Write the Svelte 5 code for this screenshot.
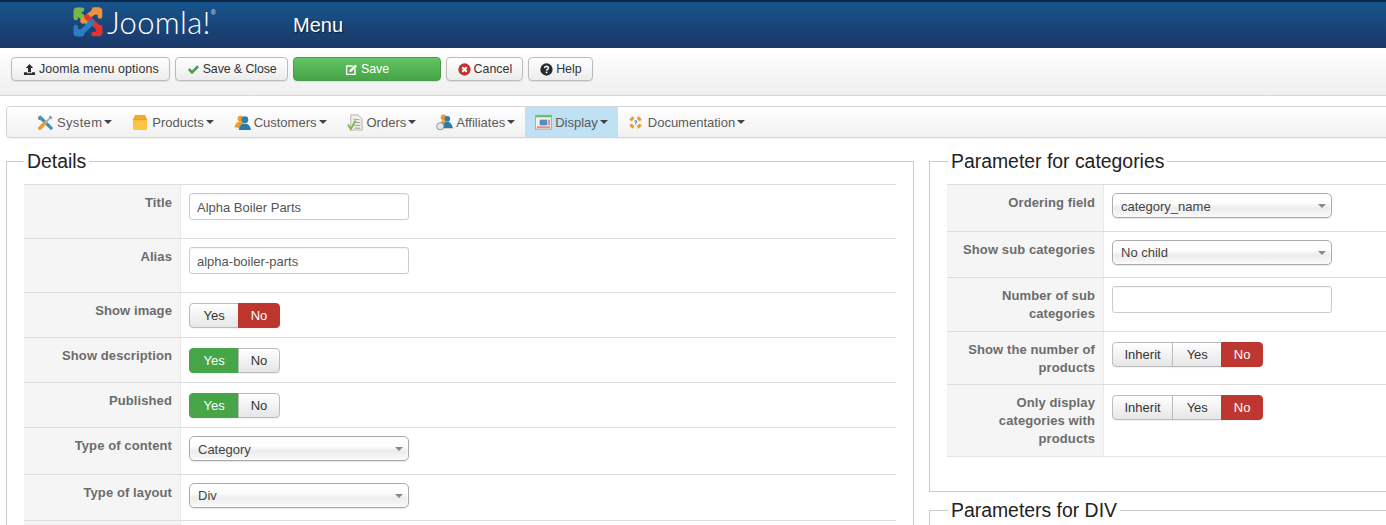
<script>
	const navItems = [
		{ label: 'System', icon: 'system' },
		{ label: 'Products', icon: 'products' },
		{ label: 'Customers', icon: 'customers' },
		{ label: 'Orders', icon: 'orders' },
		{ label: 'Affiliates', icon: 'affiliates' },
		{ label: 'Display', icon: 'display', active: true },
		{ label: 'Documentation', icon: 'docs' }
	];

	const details = [
		{ label: 'Title', type: 'text', value: 'Alpha Boiler Parts' },
		{ label: 'Alias', type: 'text', value: 'alpha-boiler-parts' },
		{ label: 'Show image', type: 'radio', options: ['Yes', 'No'], selected: 'No' },
		{ label: 'Show description', type: 'radio', options: ['Yes', 'No'], selected: 'Yes' },
		{ label: 'Published', type: 'radio', options: ['Yes', 'No'], selected: 'Yes' },
		{ label: 'Type of content', type: 'select', value: 'Category' },
		{ label: 'Type of layout', type: 'select', value: 'Div' },
		{ label: '', type: 'none' }
	];

	const categoryParams = [
		{ label: 'Ordering field', type: 'select', value: 'category_name' },
		{ label: 'Show sub categories', type: 'select', value: 'No child' },
		{ label: 'Number of sub categories', type: 'text', value: '' },
		{ label: 'Show the number of products', type: 'radio', options: ['Inherit', 'Yes', 'No'], selected: 'No' },
		{ label: 'Only display categories with products', type: 'radio', options: ['Inherit', 'Yes', 'No'], selected: 'No' }
	];
</script>

{#snippet navIcon(name)}
	<svg class="nav-icon" viewBox="0 0 18 18" aria-hidden="true">
		{#if name === 'system'}
			<path d="M4 4 L15 15" stroke="#3f8fb5" stroke-width="3.4" stroke-linecap="round" />
			<path d="M1 3.5 L3.5 1 L4 3.5 L6.5 4 L4.5 7 L1.5 6 Z" fill="#4f93b5" />
			<path d="M9 9 L3 15" stroke="#ef9a2e" stroke-width="3.8" stroke-linecap="round" />
			<path d="M9 9 L15 3" stroke="#9fb4bf" stroke-width="2" />
			<path d="M14 1.5 L16.5 4 L15 5.5 L12.5 3 Z" fill="#7f98a5" />
		{:else if name === 'products'}
			<path d="M1 6 L3 1 H14 L16 6 Z" fill="#f2a92f" />
			<rect x="1" y="5.5" width="15" height="11.5" rx="1" fill="#fbc443" />
			<rect x="1" y="5.5" width="15" height="1" fill="#dc9a2a" />
		{:else if name === 'customers'}
			<circle cx="7" cy="5" r="3.2" fill="#ef9a2e" />
			<path d="M0.5 14 Q2 8 7 8 Q10 8 11 13 L8 15 Z" fill="#ef9a2e" />
			<circle cx="11.5" cy="6" r="3.6" fill="#2f7fa8" />
			<path d="M5 17 Q6 10 11.5 10 Q17 10 18 17 Z" fill="#2a7ba5" />
		{:else if name === 'orders'}
			<path d="M4 1 H12 L16 5 V17 H4 Z" fill="#efefe8" stroke="#b5b5ad" />
			<path d="M7 6 H13 M7 9 H14 M8 12 H14 M8 15 H14" stroke="#9a9a92" />
			<path d="M1 11 L4 16 L9 7" fill="none" stroke="#7ab648" stroke-width="2" />
		{:else if name === 'affiliates'}
			<circle cx="8" cy="3.6" r="3" fill="#ef9a2e" />
			<path d="M4 12 Q5 6.5 8 6.5 Q11 6.5 12 12 Z" fill="#ef9a2e" />
			<circle cx="12" cy="5" r="3" fill="#2f7fa8" />
			<path d="M7 15 Q8 8 12 8 Q16 8 18 15 Z" fill="#2a7ba5" />
			<circle cx="4.5" cy="13" r="3.8" fill="#dfe7ea" stroke="#7d97a3" />
		{:else if name === 'display'}
			<rect x="0.5" y="2" width="17" height="14" fill="#f4f1ec" stroke="#a9a9a9" />
			<rect x="0.5" y="1" width="17" height="2.5" fill="#6fbf73" />
			<rect x="5" y="6" width="8" height="6" fill="#4d8fc5" />
			<rect x="2" y="13" width="14" height="2" fill="#e88a8a" />
			<rect x="14" y="6" width="2" height="6" fill="#d88" />
		{:else if name === 'docs'}
			<circle cx="8" cy="9" r="5.5" fill="none" stroke="#f3f3f3" stroke-width="3" />
			<circle class="ring" cx="8" cy="9" r="5.5" pathLength="4" fill="none" stroke="#e59a2c" stroke-width="3.2" />
			<path d="M6.6 7.8 Q8 6.6 9.3 7.7 Q9.5 8.7 8 9.6 V10.2 M8 11 V11.8" fill="none" stroke="#4a90c2" stroke-width="1.2" />
		{/if}
	</svg>
{/snippet}

{#snippet paramRow(row)}
	<div class="row">
		<div class="row-label">{row.label}</div>
		<div class="row-control">
			{#if row.type === 'text'}
				<input class="text-input" type="text" value={row.value} />
			{:else if row.type === 'select'}
				<div class="select">
					<span>{row.value}</span>
					<i class="select-caret"></i>
				</div>
			{:else if row.type === 'radio'}
				<div class="radio-group">
					{#each row.options as option}
						<button
							class="radio"
							class:yes={option === 'Yes'}
							class:inherit={option === 'Inherit'}
							class:on-yes={row.selected === option && option === 'Yes'}
							class:on-no={row.selected === option && option === 'No'}
						>{option}</button>
					{/each}
				</div>
			{/if}
		</div>
	</div>
{/snippet}

<div class="page">
	<header class="topbar">
		<div class="brand">
			<svg class="brand-mark" viewBox="0 0 30 30" aria-hidden="true">
				<path d="M4 5 L16 17" stroke="#7ab648" stroke-width="5.4" stroke-linecap="round" fill="none" />
				<path d="M2.8 11 V4 Q3 2.6 4.4 2.8 H9" stroke="#7ab648" stroke-width="4.6" stroke-linecap="round" stroke-linejoin="round" fill="none" />
				<path d="M25 5 H20.5 L10 14" stroke="#f0923b" stroke-width="5.4" stroke-linecap="round" stroke-linejoin="round" fill="none" />
				<path d="M27 9.5 V4 Q27 2.6 25.6 2.6 H21" stroke="#f0923b" stroke-width="4.6" stroke-linecap="round" stroke-linejoin="round" fill="none" />
				<path d="M25.5 25 V21 L14 10" stroke="#e2332f" stroke-width="5.4" stroke-linecap="round" stroke-linejoin="round" fill="none" />
				<path d="M20.5 27 H26 Q27.2 27 27.2 25.6 V20" stroke="#e2332f" stroke-width="4.6" stroke-linecap="round" stroke-linejoin="round" fill="none" />
				<path d="M5 25 H9 L18.5 15.5" stroke="#2b7fc1" stroke-width="5.4" stroke-linecap="round" stroke-linejoin="round" fill="none" />
				<path d="M2.8 20 V26 Q2.8 27.2 4 27.2 H9" stroke="#2b7fc1" stroke-width="4.6" stroke-linecap="round" stroke-linejoin="round" fill="none" />
			</svg>
			<span class="brand-name">Joomla!</span>
			<span class="brand-reg">®</span>
		</div>
		<h1>Menu</h1>
	</header>

	<div class="toolbar">
		<button class="tool">
			<svg class="tool-icon" viewBox="0 0 14 14" aria-hidden="true">
				<path d="M7 1 L11 5.5 H8.6 V10 H5.4 V5.5 H3 Z M1 10 H4.4 V11 H9.6 V10 H13 V13 H1 Z" fill="#2b2b2b" />
			</svg>
			Joomla menu options
		</button>
		<button class="tool">
			<svg class="tool-icon" viewBox="0 0 14 14" aria-hidden="true">
				<path d="M1 7.5 L3 5.5 L5.4 8 L11 2.5 L13 4.5 L5.4 12 Z" fill="#4d9e52" />
			</svg>
			Save &amp; Close
		</button>
		<button class="tool save">
			<svg class="tool-icon" viewBox="0 0 14 14" aria-hidden="true">
				<path d="M1 2.5 H9 L7.6 4 H2.5 V11.5 H10 V7 L11.5 5.5 V13 H1 Z" fill="#fff" />
				<path d="M5 7.5 L11 1.5 L13 3.5 L7 9.5 L4.6 10 Z" fill="#fff" />
			</svg>
			Save
		</button>
		<button class="tool">
			<svg class="tool-icon" viewBox="0 0 14 14" aria-hidden="true">
				<circle cx="7" cy="7" r="6.6" fill="#c9302c" />
				<path d="M4.6 4.6 L9.4 9.4 M9.4 4.6 L4.6 9.4" stroke="#fff" stroke-width="2.2" />
			</svg>
			Cancel
		</button>
		<button class="tool">
			<svg class="tool-icon" viewBox="0 0 14 14" aria-hidden="true">
				<circle cx="7" cy="7" r="6.6" fill="#252a30" />
				<path d="M4.9 5.4 Q5.2 3.5 7.2 3.5 Q9.2 3.6 9.2 5.2 Q9.2 6.2 7.8 7 Q7.1 7.4 7.1 8.2" fill="none" stroke="#fff" stroke-width="1.6" />
				<rect x="6.2" y="9.2" width="1.8" height="1.8" fill="#fff" />
			</svg>
			Help
		</button>
	</div>

	<nav class="menu">
		{#each navItems as item}
			<div class="menu-item" class:active={item.active}>
				{@render navIcon(item.icon)}
				<span>{item.label}</span>
				<i class="menu-caret"></i>
			</div>
		{/each}
	</nav>

	<main class="columns">
		<fieldset class="panel">
			<legend>Details</legend>
			<div class="rows">
				{#each details as row}
					{@render paramRow(row)}
				{/each}
			</div>
		</fieldset>

		<div class="side">
			<fieldset class="panel">
				<legend>Parameter for categories</legend>
				<div class="rows closed">
					{#each categoryParams as row}
						{@render paramRow(row)}
					{/each}
				</div>
			</fieldset>
			<fieldset class="panel">
				<legend>Parameters for DIV</legend>
			</fieldset>
		</div>
	</main>
</div>

<style>
	:global(body) {
		margin: 0;
		background: #fff;
		overflow: hidden;
	}

	.page {
		width: 1386px;
		height: 525px;
		overflow: hidden;
		font-family: "Liberation Sans", Arial, sans-serif;
		font-size: 13px;
		color: #555;
	}

	.topbar {
		box-sizing: border-box;
		height: 48px;
		display: flex;
		align-items: center;
		border-top: 2px solid #0c2947;
		background: linear-gradient(#17558c, #1b3768);
	}

	.brand {
		display: flex;
		align-items: center;
		width: 220px;
		margin-left: 73px;
		height: 32px;
		margin-top: -6px;
	}

	.brand-mark {
		width: 30px;
		height: 30px;
		flex: none;
	}

	.brand-name {
		margin-left: 4px;
		font-family: Lato, sans-serif;
		font-weight: 300;
		font-size: 31px;
		line-height: 32px;
		letter-spacing: 0.3px;
		color: #fff;
	}

	.brand-reg {
		align-self: flex-start;
		font-size: 7px;
		color: #dfe6ee;
		margin-top: 3px;
	}

	h1 {
		margin: 0;
		font-size: 20px;
		font-weight: 400;
		color: #fff;
		text-shadow: 1px 1px 1px #0b1d38;
	}

	.toolbar {
		box-sizing: border-box;
		height: 48px;
		display: flex;
		align-items: flex-start;
		gap: 5px;
		padding: 9px 0 0 11px;
		background: linear-gradient(#fff, #efefef);
		border-bottom: 1px solid #d6d6d6;
	}

	.tool {
		box-sizing: border-box;
		height: 24px;
		padding: 0 10px 0 11px;
		display: flex;
		align-items: center;
		justify-content: center;
		gap: 3px;
		font: 12.4px "Liberation Sans", Arial, sans-serif;
		color: #333;
		background: linear-gradient(#fff, #ececec);
		border: 1px solid #bbb;
		border-radius: 4px;
		box-shadow: 0 1px 1px rgba(0, 0, 0, 0.08);
	}

	.tool:nth-child(1) {
		letter-spacing: 0.1px;
	}

	.tool:nth-child(2) {
		letter-spacing: -0.1px;
	}

	.tool.save {
		width: 148px;
		color: #fff;
		background: linear-gradient(#62c462, #46a546);
		border-color: #4a9a4a;
	}

	.tool-icon {
		width: 13px;
		height: 13px;
		flex: none;
	}

	.menu {
		box-sizing: border-box;
		width: 1400px;
		height: 32px;
		margin: 10px 0 0 6px;
		padding-left: 20px;
		display: flex;
		border: 1px solid #d4d4d4;
		border-radius: 4px;
		background: linear-gradient(#fff, #f1f1f1);
		box-shadow: 0 1px 2px rgba(0, 0, 0, 0.06);
	}

	.menu-item {
		display: flex;
		align-items: center;
		padding: 0 10px;
		font-size: 13px;
		color: #5a5a5a;
	}

	.menu-item:first-child span {
		letter-spacing: 0.33px;
	}

	.menu-item.active {
		background: #c0e0f3;
	}

	.nav-icon {
		width: 17px;
		height: 17px;
		margin-right: 3px;
		flex: none;
	}

	.ring {
		stroke-dasharray: 0.5 0.5;
		stroke-dashoffset: -0.25;
	}

	.menu-caret {
		margin-left: 2px;
		border-top: 4px solid #444;
		border-left: 4px solid transparent;
		border-right: 4px solid transparent;
	}

	.columns {
		display: grid;
		grid-template-columns: 908px 470px;
		gap: 15px;
		margin: 12px 0 0 6px;
		align-items: start;
	}

	.panel {
		margin: 0;
		padding: 0 17px;
		border: 1px solid #ccc;
		min-width: 0;
	}

	legend {
		margin-left: 0;
		padding: 0 3px;
		font-size: 19.4px;
		line-height: 22px;
		color: #222;
	}

	.side legend {
		margin-left: 1px;
	}

	.rows {
		margin-top: 12px;
	}

	.rows.closed {
		border-bottom: 1px solid #e2e2e2;
		margin-bottom: 34px;
	}

	.side {
		display: flex;
		flex-direction: column;
		gap: 7px;
	}

	.side .panel:last-child {
		height: 60px;
	}

	.side .rows {
		margin-right: -40px;
	}

	.row {
		display: flex;
		border-top: 1px solid #ddd;
	}

	.row-label {
		box-sizing: border-box;
		flex: none;
		width: 157px;
		padding: 9px 8px 7px 12px;
		line-height: 18px;
		text-align: right;
		font-weight: 700;
		letter-spacing: 0.1px;
		color: #6c6c6c;
		background: #f5f5f5;
		border-right: 1px solid #e8e8e8;
	}

	.rows.closed .row:last-child .row-label {
		padding-bottom: 8px;
	}

	.row-control {
		padding: 8px 8px 0;
		min-width: 0;
	}

	.text-input {
		display: block;
		box-sizing: border-box;
		width: 220px;
		height: 27px;
		margin-bottom: 18px;
		padding: 1px 7px 0;
		font: 13px "Liberation Sans", Arial, sans-serif;
		color: #555;
		background: #fff;
		border: 1px solid #ccc;
		border-radius: 3px;
		box-shadow: inset 0 1px 1px rgba(0, 0, 0, 0.05);
	}

	.select {
		box-sizing: border-box;
		width: 220px;
		height: 25px;
		margin-bottom: 12.5px;
		padding: 1px 5px 0 8px;
		display: flex;
		align-items: center;
		justify-content: space-between;
		color: #444;
		background: linear-gradient(#fff, #fdfdfd 40%, #ececec 62%, #fafafa);
		border: 1px solid #aaa;
		border-radius: 5px;
		box-shadow: inset 0 0 3px #fff, 0 1px 1px rgba(0, 0, 0, 0.1);
	}

	.select-caret {
		border-top: 4px solid #888;
		border-left: 4px solid transparent;
		border-right: 4px solid transparent;
	}

	.radio-group {
		display: flex;
		margin: 2px 0 9px;
	}

	.radio {
		box-sizing: border-box;
		height: 25px;
		padding: 0 11.5px;
		margin-left: -1px;
		font: 13px "Liberation Sans", Arial, sans-serif;
		color: #333;
		background: linear-gradient(#fff, #e6e6e6);
		border: 1px solid #bbb;
		box-shadow: 0 1px 1px rgba(0, 0, 0, 0.05);
	}

	.radio.yes {
		padding: 0 13.5px;
	}

	.radio.inherit {
		padding: 0 11.5px;
	}

	.radio:first-child {
		margin-left: 0;
		border-radius: 4px 0 0 4px;
	}

	.radio:last-child {
		border-radius: 0 4px 4px 0;
	}

	.radio.on-yes {
		color: #fff;
		background: #46a546;
		border-color: #46a546;
	}

	.radio.on-no {
		color: #fff;
		background: #bd362f;
		border-color: #bd362f;
	}
</style>
